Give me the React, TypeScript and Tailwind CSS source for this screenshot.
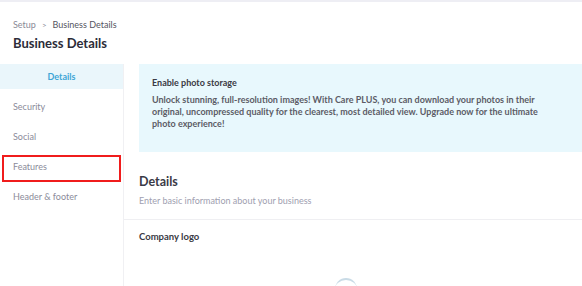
import React from "react";

export default function App() {
  const font = { fontFamily: "Lato, 'Noto Sans', sans-serif" };
  return (
    <div className="w-[582px] h-[286px] overflow-hidden bg-white" style={font}>
      <div className="h-[2px] bg-[#eeeef4]" />
      <div className="px-[13px] pt-[16px] h-[62px]">
        <div className="flex items-center gap-[6px] text-[9px] leading-[14px]">
          <span className="text-[#8a8a96]">Setup</span>
          <span className="text-[#8a8a96] text-[8px]">&gt;</span>
          <span className="text-[#55555f]">Business Details</span>
        </div>
        <div className="mt-[1px] text-[13px] leading-[20px] font-bold text-[#2c2c38]">
          Business Details
        </div>
      </div>
      <div className="flex h-[222px]">
        <div className="w-[124px] shrink-0 border-r border-[#f0f0f3]">
          <div className="h-[25px] bg-[#eaf6fb] flex items-center justify-center text-[9px] font-bold text-[#3ea6d6]">
            Details
          </div>
          <div className="pt-[3px]">
            {["Security", "Social", "Features", "Header & footer"].map((t) => (
              <div
                key={t}
                className="relative h-[30px] flex items-center pl-[13px] text-[9px] text-[#8b8b9a]"
              >
                {t}
                {t === "Features" && (
                  <div className="absolute left-[2px] right-[2px] top-[3px] bottom-0 border-2 border-[#f01c1c]" />
                )}
              </div>
            ))}
          </div>
        </div>
        <div className="flex-1">
          <div className="pl-[15px]">
            <div className="h-[88px] bg-[#e8f8fd] px-[13px] pt-[12px]">
              <div className="text-[9px] leading-[14px] font-bold text-[#3a3a44]">
                Enable photo storage
              </div>
              <div className="mt-[4px] pr-[20px] text-[9px] leading-[12px] font-bold text-[#5c5c66]">
                Unlock stunning, full-resolution images! With Care PLUS, you can download your photos in their original, uncompressed quality for the clearest, most detailed view. Upgrade now for the ultimate photo experience!
              </div>
            </div>
            <div className="pt-[22px] h-[67px]">
              <div className="text-[12.5px] leading-[16px] font-bold text-[#3a3a46]">Details</div>
              <div className="mt-[4px] text-[9px] leading-[14px] text-[#a0a0b0]">
                Enter basic information about your business
              </div>
            </div>
          </div>
          <div className="border-t border-[#efeff2] pl-[15px] pt-[10px]">
            <div className="text-[9.5px] leading-[14px] font-bold text-[#3a3a44]">Company logo</div>
            <div className="mt-[34px] ml-[196px] w-[22px] h-[22px] rounded-full border-t-2 border-[#c9dbe6]" />
          </div>
        </div>
      </div>
    </div>
  );
}
